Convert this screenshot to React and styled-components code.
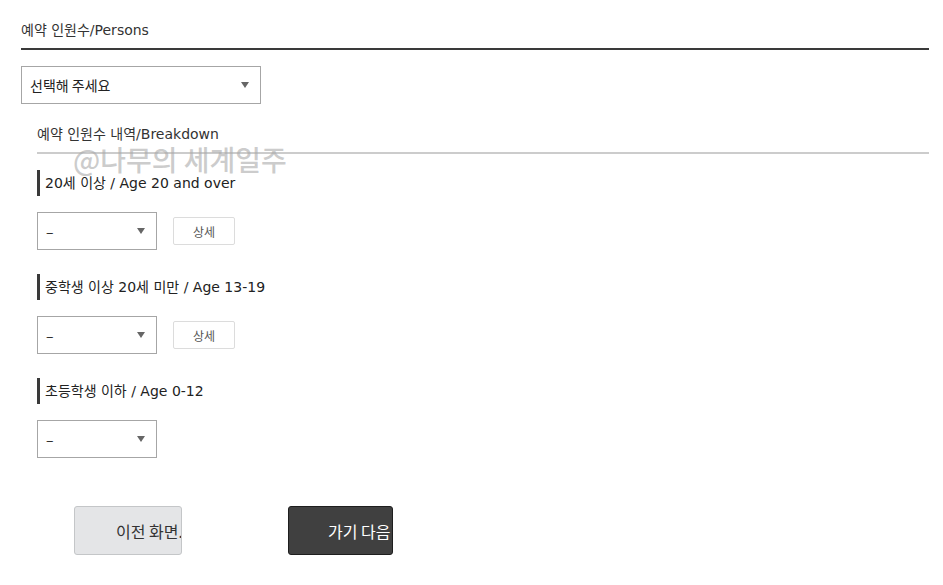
import { createGlobalStyle, styled } from "styled-components";

const GlobalStyle = createGlobalStyle`
    html, body {
        margin: 0;
        padding: 0;
        background: #fff;
    }
    body {
        font-family: "DejaVu Sans", "Noto Sans CJK KR", sans-serif;
        color: #222;
    }
`

const groups = [
    { ko: "20세 이상", en: "Age 20 and over", detail: true },
    { ko: "중학생 이상 20세 미만", en: "Age 13-19", detail: true },
    { ko: "초등학생 이하", en: "Age 0-12", detail: false },
]

export default function App(){
    return(
        <>
        <GlobalStyle/>
        <Page>
            <Watermark>@나무의 세계일주</Watermark>
            <Title>예약 인원수/Persons</Title>
            <Select width={240}>
                <span>선택해 주세요</span>
                <Arrow/>
            </Select>
            <Breakdown>
                <SubTitle>예약 인원수 내역/Breakdown</SubTitle>
                {groups.map((g)=>(
                    <Group key={g.en}>
                        <Label>{g.ko} / {g.en}</Label>
                        <Row>
                            <Select width={120}>
                                <span>–</span>
                                <Arrow/>
                            </Select>
                            {g.detail && <DetailButton>상세</DetailButton>}
                        </Row>
                    </Group>
                ))}
            </Breakdown>
            <Buttons>
                <NavButton>이전 화면.</NavButton>
                <NavButton dark>가기 다음</NavButton>
            </Buttons>
        </Page>
        </>
    )
}

const Page = styled.div`
    position: relative;
    width: 908px;
    padding: 18px 0 0 21px;
`

const Watermark = styled.div`
    position: absolute;
    left: 73px;
    top: 139px;
    font-family: "Noto Sans CJK KR", sans-serif;
    font-size: 28px;
    font-weight: 500;
    color: rgba(170, 170, 170, 0.6);
    pointer-events: none;
`

const Title = styled.div`
    font-size: 14px;
    line-height: 24px;
    color: #333;
    padding-bottom: 6px;
    border-bottom: 2px solid #3a3a3a;
`

const Select = styled.div`
    box-sizing: border-box;
    width: ${p => p.width}px;
    height: 38px;
    margin-top: ${p => p.width > 200 ? "16px" : "0"};
    border: 1px solid #a6a6a6;
    display: flex;
    align-items: center;
    justify-content: space-between;
    padding: 0 11px 0 8px;
    font-family: "Noto Sans CJK KR", sans-serif;
    font-size: 14px;
    color: #222;
    background: #fff;
`

const Arrow = styled.span`
    width: 0;
    height: 0;
    border-left: 4px solid transparent;
    border-right: 4px solid transparent;
    border-top: 6px solid #666;
`

const Breakdown = styled.div`
    margin-left: 16px;
    margin-top: 19px;
`

const SubTitle = styled.div`
    font-size: 14px;
    line-height: 22px;
    color: #333;
    padding-bottom: 7px;
    border-bottom: 2px solid #cccccc;
`

const Group = styled.div`
    margin-top: 16px;
    & + & {
        margin-top: 24px;
    }
`

const Label = styled.div`
    height: 26px;
    line-height: 26px;
    border-left: 3px solid #3a3a3a;
    padding-left: 5px;
    font-size: 14px;
    color: #222;
`

const Row = styled.div`
    display: flex;
    align-items: center;
    gap: 16px;
    margin-top: 16px;
`

const DetailButton = styled.div`
    box-sizing: border-box;
    width: 62px;
    height: 28px;
    border: 1px solid #dcdcdc;
    border-radius: 2px;
    display: flex;
    align-items: center;
    justify-content: center;
    font-family: "Noto Sans CJK KR", sans-serif;
    font-size: 12px;
    color: #555;
`

const Buttons = styled.div`
    display: flex;
    gap: 106px;
    margin: 48px 0 0 53px;
`

const NavButton = styled.div`
    box-sizing: border-box;
    width: ${p => p.dark ? "105px" : "108px"};
    height: 49px;
    border-radius: 3px;
    border: 1px solid ${p => p.dark ? "#1e1e1e" : "#c4c6c8"};
    background: ${p => p.dark ? "#404040" : "#e4e5e7"};
    color: ${p => p.dark ? "#fff" : "#333"};
    font-family: "Noto Sans CJK KR", sans-serif;
    font-size: 16px;
    display: flex;
    align-items: center;
    padding-left: ${p => p.dark ? "39px" : "41px"};
    white-space: nowrap;
    overflow: hidden;
`
